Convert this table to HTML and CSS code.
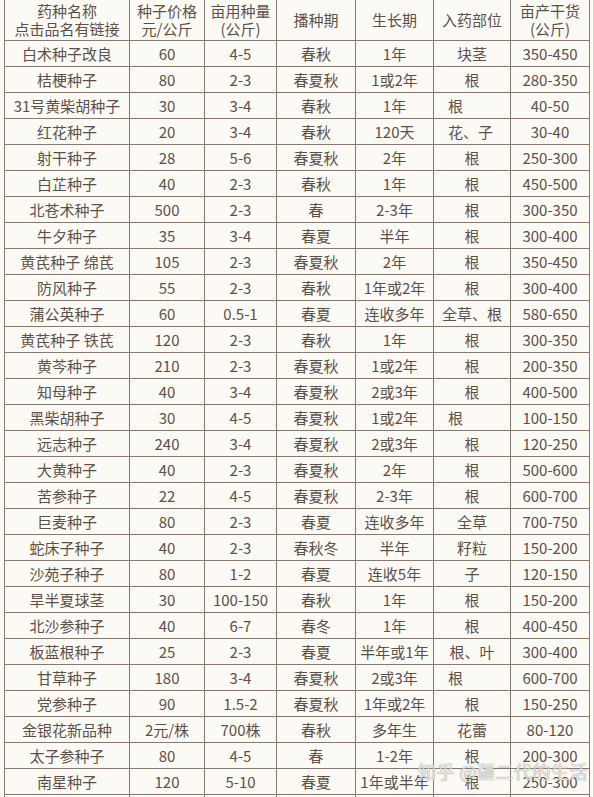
FILE: index.html
```html
<!DOCTYPE html>
<html lang="zh">
<head>
<meta charset="utf-8">
<link rel="stylesheet" href="styles.css">
</head>
<body>
<div class="page">
<table class="seed">
<colgroup>
<col class="c1"><col class="c2"><col class="c3"><col class="c4"><col class="c5"><col class="c6"><col class="c7">
</colgroup>
<thead>
<tr class="head"><th>药种名称<br>点击品名有链接</th><th>种子价格<br>元/公斤</th><th>亩用种量<br>(公斤)</th><th>播种期</th><th>生长期</th><th>入药部位</th><th>亩产干货<br>(公斤)</th></tr>
</thead>
<tbody>
<tr><td>白术种子改良</td><td>60</td><td>4-5</td><td>春秋</td><td>1年</td><td>块茎</td><td>350-450</td></tr>
<tr><td>桔梗种子</td><td>80</td><td>2-3</td><td>春夏秋</td><td>1或2年</td><td>根</td><td>280-350</td></tr>
<tr><td>31号黄柴胡种子</td><td>30</td><td>3-4</td><td>春秋</td><td>1年</td><td class="left">根</td><td>40-50</td></tr>
<tr><td>红花种子</td><td>20</td><td>3-4</td><td>春秋</td><td>120天</td><td class="left">花、子</td><td>30-40</td></tr>
<tr><td>射干种子</td><td>28</td><td>5-6</td><td>春夏秋</td><td>2年</td><td>根</td><td>250-300</td></tr>
<tr><td>白芷种子</td><td>40</td><td>2-3</td><td>春秋</td><td>1年</td><td>根</td><td>450-500</td></tr>
<tr><td>北苍术种子</td><td>500</td><td>2-3</td><td>春</td><td>2-3年</td><td>根</td><td>300-350</td></tr>
<tr><td>牛夕种子</td><td>35</td><td>3-4</td><td>春夏</td><td>半年</td><td>根</td><td>300-400</td></tr>
<tr><td>黄芪种子 绵芪</td><td>105</td><td>2-3</td><td>春夏秋</td><td>2年</td><td>根</td><td>350-450</td></tr>
<tr><td>防风种子</td><td>55</td><td>2-3</td><td>春秋</td><td>1年或2年</td><td>根</td><td>300-400</td></tr>
<tr><td>蒲公英种子</td><td>60</td><td>0.5-1</td><td>春夏</td><td>连收多年</td><td>全草、根</td><td>580-650</td></tr>
<tr><td>黄芪种子 铁芪</td><td>120</td><td>2-3</td><td>春秋</td><td>1年</td><td>根</td><td>300-350</td></tr>
<tr><td>黄芩种子</td><td>210</td><td>2-3</td><td>春夏秋</td><td>1或2年</td><td>根</td><td>200-350</td></tr>
<tr><td>知母种子</td><td>40</td><td>3-4</td><td>春夏秋</td><td>2或3年</td><td>根</td><td>400-500</td></tr>
<tr><td>黑柴胡种子</td><td>30</td><td>4-5</td><td>春夏秋</td><td>1或2年</td><td class="left">根</td><td>100-150</td></tr>
<tr><td>远志种子</td><td>240</td><td>3-4</td><td>春夏秋</td><td>2或3年</td><td>根</td><td>120-250</td></tr>
<tr><td>大黄种子</td><td>40</td><td>2-3</td><td>春夏秋</td><td>2年</td><td>根</td><td>500-600</td></tr>
<tr><td>苦参种子</td><td>22</td><td>4-5</td><td>春夏秋</td><td>2-3年</td><td>根</td><td>600-700</td></tr>
<tr><td>巨麦种子</td><td>80</td><td>2-3</td><td>春夏</td><td>连收多年</td><td>全草</td><td>700-750</td></tr>
<tr><td>蛇床子种子</td><td>40</td><td>2-3</td><td>春秋冬</td><td>半年</td><td>籽粒</td><td>150-200</td></tr>
<tr><td>沙苑子种子</td><td>80</td><td>1-2</td><td>春夏</td><td>连收5年</td><td>子</td><td>120-150</td></tr>
<tr><td>旱半夏球茎</td><td>30</td><td>100-150</td><td>春秋</td><td>1年</td><td>根</td><td>150-200</td></tr>
<tr><td>北沙参种子</td><td>40</td><td>6-7</td><td>春冬</td><td>1年</td><td>根</td><td>400-450</td></tr>
<tr><td>板蓝根种子</td><td>25</td><td>2-3</td><td>春夏</td><td>半年或1年</td><td>根、叶</td><td>300-400</td></tr>
<tr><td>甘草种子</td><td>180</td><td>3-4</td><td>春夏秋</td><td>2或3年</td><td class="left">根</td><td>600-700</td></tr>
<tr><td>党参种子</td><td>90</td><td>1.5-2</td><td>春夏秋</td><td>1年或2年</td><td>根</td><td>150-250</td></tr>
<tr><td>金银花新品种</td><td>2元/株</td><td>700株</td><td>春秋</td><td>多年生</td><td>花蕾</td><td>80-120</td></tr>
<tr><td>太子参种子</td><td>80</td><td>4-5</td><td>春</td><td>1-2年</td><td>根</td><td>200-300</td></tr>
<tr><td>南星种子</td><td>120</td><td>5-10</td><td>春夏</td><td>1年或半年</td><td>根</td><td>250-300</td></tr>
<tr><td>&nbsp;</td><td></td><td></td><td></td><td></td><td></td><td></td></tr>
</tbody>
</table>
<div class="watermark">知乎 @疆二代的生活</div>
</div>
</body>
</html>
```
FILE: styles.css
```css
html, body {
  margin: 0;
  padding: 0;
  background: #fcfaf5;
}
body {
  font-family: "Noto Sans CJK SC", "Noto Sans", sans-serif;
  color: #5c5049;
}
.page {
  position: relative;
  width: 593px;
  height: 797px;
  overflow: hidden;
  border-right: 1px solid #d8d2cc;
}
.seed {
  margin-left: 4px;
  border-collapse: collapse;
  table-layout: fixed;
  width: 586px;
  font-size: 15px;
}
.c1 { width: 125px; }
.c2 { width: 75px; }
.c3 { width: 72px; }
.c4 { width: 79px; }
.c5 { width: 78px; }
.c6 { width: 77px; }
.c7 { width: 79px; }
.seed th, .seed td {
  border: 1px solid #857972;
  padding: 0;
  text-align: center;
  font-weight: normal;
  white-space: nowrap;
  overflow: hidden;
}
.seed td {
  height: 25px;
  line-height: 25px;
}
.seed .head th {
  border-top: none;
  height: 39px;
  line-height: 18px;
  padding-bottom: 1px;
}
.seed td.left {
  text-align: left;
  padding-left: 14px;
}
.watermark {
  position: absolute;
  left: 418px;
  top: 758px;
  font-size: 18px;
  letter-spacing: 0.5px;
  color: rgba(255, 255, 255, 0.8);
  text-shadow: 0 0 1px rgba(100, 90, 82, 0.65), 0 0 1px rgba(100, 90, 82, 0.4);
  white-space: nowrap;
}
```
